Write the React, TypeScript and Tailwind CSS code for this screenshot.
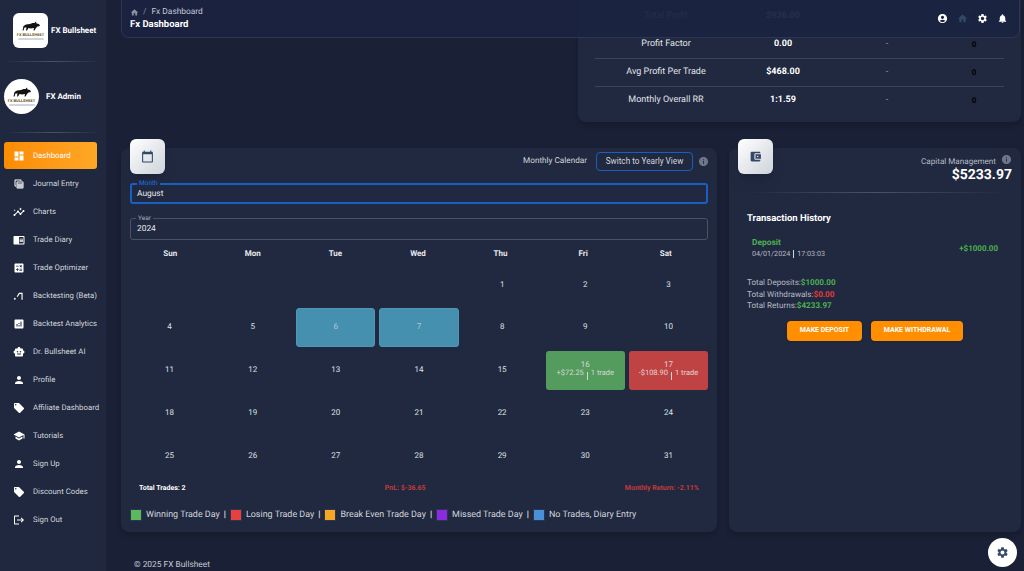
import {
  MdAccountBalanceWallet,
  MdAccountCircle,
  MdAnalytics,
  MdCalculate,
  MdCalendarToday,
  MdChromeReaderMode,
  MdDashboard,
  MdHome,
  MdInfo,
  MdInsights,
  MdLocalOffer,
  MdLogout,
  MdNotifications,
  MdPerson,
  MdSchool,
  MdSettings,
  MdSmartToy,
  MdTableView,
} from 'react-icons/md'

function BacktestIcon() {
  return (
    <svg viewBox="0 0 24 24" className="w-[11px] h-[11px]" fill="currentColor">
      <circle cx="4" cy="19" r="2" />
      <path d="M8 14l5-8h8v15h-2.5V8.5h-4L10 15.5z" />
    </svg>
  )
}

function BullLogo() {
  return (
    <div className="flex flex-col items-center w-full">
      <svg viewBox="0 0 40 20" className="w-[20px] h-[11px]" fill="#15120f">
        <path d="M3 18l2-9 5-3 8-1 5-2 4 0 3-3 1 4 5 1 2 4-5 1-3 3-3 5h-2l1-5-6 1-5-1-3 5H10l1-6-4 0-2 6z" />
      </svg>
      <span className="text-[4px] leading-[5px] font-bold text-[#6b5320] whitespace-nowrap">FX BULLSHEET</span>
      <div className="w-[26px] h-[2px] bg-gray-300 rounded-full mt-px" />
    </div>
  )
}

const navItems = [
  { label: 'Dashboard', icon: <MdDashboard size={12} />, active: true },
  { label: 'Journal Entry', icon: <MdTableView size={12} /> },
  { label: 'Charts', icon: <MdInsights size={12} /> },
  { label: 'Trade Diary', icon: <MdChromeReaderMode size={12} /> },
  { label: 'Trade Optimizer', icon: <MdCalculate size={12} /> },
  { label: 'Backtesting (Beta)', icon: <BacktestIcon /> },
  { label: 'Backtest Analytics', icon: <MdAnalytics size={12} /> },
  { label: 'Dr. Bullsheet AI', icon: <MdSmartToy size={12} /> },
  { label: 'Profile', icon: <MdPerson size={12} /> },
  { label: 'Affiliate Dashboard', icon: <MdLocalOffer size={12} /> },
  { label: 'Tutorials', icon: <MdSchool size={12} /> },
  { label: 'Sign Up', icon: <MdPerson size={12} /> },
  { label: 'Discount Codes', icon: <MdLocalOffer size={12} /> },
  { label: 'Sign Out', icon: <MdLogout size={12} /> },
]

const stats = [
  { label: 'Profit Factor', value: '0.00' },
  { label: 'Avg Profit Per Trade', value: '$468.00' },
  { label: 'Monthly Overall RR', value: '1:1.59' },
]

const weekDays = ['Sun', 'Mon', 'Tue', 'Wed', 'Thu', 'Fri', 'Sat']

const legend = [
  { label: 'Winning Trade Day', color: 'bg-[#5cb85c]' },
  { label: 'Losing Trade Day', color: 'bg-[#e74040]' },
  { label: 'Break Even Trade Day', color: 'bg-[#f5a623]' },
  { label: 'Missed Trade Day', color: 'bg-[#8a2be2]' },
  { label: 'No Trades, Diary Entry', color: 'bg-[#4a90d9]' },
]

function Divider() {
  return <div className="h-px mx-1 bg-gradient-to-r from-transparent via-[#4a5264] to-transparent shrink-0" />
}

function Sidebar() {
  return (
    <aside className="w-[106px] shrink-0 h-full bg-[#1f283e] text-white flex flex-col">
      <div className="h-[61px] flex items-center pl-[13px] gap-[3px] shrink-0">
        <div className="w-[35px] h-[35px] bg-white rounded-[6px] flex items-center justify-center">
          <BullLogo />
        </div>
        <span className="text-[8px] font-bold">FX Bullsheet</span>
      </div>
      <Divider />
      <div className="h-[70px] flex items-center pl-[4px] gap-[7px] shrink-0 pb-[1px]">
        <div className="w-[35px] h-[35px] bg-white rounded-full flex items-center justify-center">
          <BullLogo />
        </div>
        <span className="text-[8px] font-bold">FX Admin</span>
      </div>
      <Divider />
      <nav className="mt-[9px] flex flex-col gap-px">
        {navItems.map((item) => (
          <div
            key={item.label}
            className={
              item.active
                ? 'h-[27px] ml-1 w-[93px] flex items-center rounded-[3px] bg-gradient-to-r from-[#fb8c00] to-[#ffa726] text-white'
                : 'h-[27px] ml-1 w-[93px] flex items-center rounded-[3px] text-white'
            }
          >
            <span className="w-[29px] pl-[9px] flex shrink-0">{item.icon}</span>
            <span className={item.active ? 'pt-px text-[7.8px] whitespace-nowrap' : 'pt-px text-[7.8px] whitespace-nowrap text-[#d3d6dc]'}>
              {item.label}
            </span>
          </div>
        ))}
      </nav>
    </aside>
  )
}

function Header() {
  return (
    <header className="absolute top-0 left-[15px] w-[899px] h-[38px] rounded-b-[8px] border border-t-0 border-[#2a3652] bg-[#1a2340]/95 flex items-center justify-between pl-[8px] pr-[11px] text-white">
      <div>
        <div className="flex items-center gap-[4px] text-[8.4px] text-[#c5c9d2] leading-[11px]">
          <MdHome size={9} className="text-[#8a90a0]" />
          <span className="text-[#8a90a0]">/</span>
          <span className="ml-[1px]">Fx Dashboard</span>
        </div>
        <div className="text-[9.5px] font-bold mt-[1px] leading-[12px]">Fx Dashboard</div>
      </div>
      <div className="flex items-center gap-[9px]">
        <MdAccountCircle size={11} />
        <MdHome size={11} className="text-[#344767]" />
        <MdSettings size={11} />
        <MdNotifications size={11} />
      </div>
    </header>
  )
}

function StatRow({ label, value, last }: { label: string; value: string; last?: boolean }) {
  return (
    <div className={last ? 'grid grid-cols-[142px_92px_116px_58px] items-center h-[28px] text-[9px]' : 'grid grid-cols-[142px_92px_116px_58px] items-center h-[28px] text-[9px] border-b border-[#3a445a]'}>
      <span className="text-center text-[#e2e4e8]">{label}</span>
      <span className="text-center font-bold text-white">{value}</span>
      <span className="text-center text-[#9aa0ad]">-</span>
      <span className="text-center text-black font-bold text-[8px]">0</span>
    </div>
  )
}

function StatsCard() {
  return (
    <div className="h-[122px] flex justify-end shrink-0 pr-[3px]">
      <div className="w-[443px] h-[122px] rounded-b-[8px] bg-[#202940] px-[17px] pt-[3px] shadow-md">
        <StatRow label="Total Profit" value="$936.00" />
        {stats.map((s, i) => (
          <StatRow key={s.label} label={s.label} value={s.value} last={i === stats.length - 1} />
        ))}
      </div>
    </div>
  )
}

function IconTile({ children }: { children: React.ReactNode }) {
  return (
    <div className="absolute -top-[9px] left-[9px] w-[35px] h-[35px] rounded-[6px] bg-gradient-to-br from-white to-[#ced4da] flex items-center justify-center text-[#344767] shadow-lg">
      {children}
    </div>
  )
}

function Field({ label, value, focused }: { label: string; value: string; focused?: boolean }) {
  return (
    <div
      className={
        focused
          ? 'relative h-[21px] rounded-[3px] border-2 border-[#1a5fc0] flex items-center pl-[5px] pt-px text-[8.4px] text-[#e6e8ec]'
          : 'relative h-[22px] rounded-[3px] border border-[#4a5264] flex items-center pl-[6px] pt-px text-[8.4px] text-[#e6e8ec]'
      }
    >
      <span
        className={
          focused
            ? 'absolute -top-[6px] left-[5px] px-[2px] bg-[#202940] text-[6.5px] leading-[8px] text-[#1a73e8]'
            : 'absolute -top-[5px] left-[5px] px-[2px] bg-[#202940] text-[6.5px] leading-[8px] text-[#aeb3bd]'
        }
      >
        {label}
      </span>
      {value}
    </div>
  )
}

function DayCell({ day }: { day: number }) {
  if (day === 6 || day === 7) {
    return (
      <div className="h-[39px] rounded-[3px] bg-[#458faf] border border-[#4f97b5] flex items-center justify-center text-[8px] text-[#b9c6cf]">
        {day}
      </div>
    )
  }
  if (day === 16 || day === 17) {
    const win = day === 16
    return (
      <div className={win ? 'h-[39px] rounded-[3px] bg-[#549c5d] flex flex-col items-center justify-center text-[#d2d8d6]' : 'h-[39px] rounded-[3px] bg-[#c04343] flex flex-col items-center justify-center text-[#e0d5d8]'}>
        <span className="text-[8px] leading-[9px]">{day}</span>
        <div className="flex items-start text-[7.5px] leading-[8px] gap-[3px] whitespace-nowrap">
          <span>{win ? '+$72.25' : '-$108.90'}</span>
          <span className="mt-[3px] h-[8px] w-px bg-[#d2d8d6]" />
          <span>1 trade</span>
        </div>
      </div>
    )
  }
  return <div className="h-[39px] flex items-center justify-center text-[8px] text-[#dfe1e6]">{day}</div>
}

function CalendarCard() {
  const days: (number | null)[] = [null, null, null, null]
  for (let d = 1; d <= 31; d++) days.push(d)

  return (
    <section className="relative w-[596px] h-[384px] shrink-0 rounded-[8px] bg-[#202940] px-[9px] pt-[4px] shadow-md">
      <IconTile>
        <MdCalendarToday size={13} />
      </IconTile>
      <div className="h-[19px] flex items-center justify-end">
        <span className="text-[8.2px] text-[#d3d6dc]">Monthly Calendar</span>
        <button className="ml-[9px] h-[19px] w-[97px] rounded-[4px] border border-[#1a5fc0] text-[8.2px] text-[#d3d6dc]">Switch to Yearly View</button>
        <MdInfo size={11} className="text-[#6f7687] ml-[5px] mr-[-1px]" />
      </div>
      <div className="mt-[12px] flex flex-col gap-[14px]">
        <Field label="Month" value="August" focused />
        <Field label="Year" value="2024" />
      </div>
      <div className="mt-[8px] ml-px mr-[3px] grid grid-cols-7 gap-x-1 text-[8px] font-bold text-[#e6e8ec] h-[12px] leading-[12px] text-center">
        {weekDays.map((d) => (
          <span key={d}>{d}</span>
        ))}
      </div>
      <div className="mt-[5px] grid grid-cols-7 gap-x-1 gap-y-[3.75px]">
        {days.map((d, i) => (d === null ? <div key={i} className="h-[39px]" /> : <DayCell key={i} day={d} />))}
      </div>
      <div className="mt-[8px] flex justify-between items-center px-[9px] text-[7px] font-bold h-[10px]">
        <span className="text-white">Total Trades: 2</span>
        <span className="text-[#c23a3a]">PnL: $-36.65</span>
        <span className="text-[#c23a3a]">Monthly Return: -2.11%</span>
      </div>
      <div className="mt-[15px] flex items-center text-[8.95px] text-[#d3d6dc]">
        {legend.map((l, i) => (
          <div key={l.label} className="flex items-center">
            <span className={`w-[12px] h-[12px] border border-[#2c3550] ${l.color}`} />
            <span className="ml-[4px] mt-px">{l.label}</span>
            {i < legend.length - 1 && <span className="mx-[4px] mt-px text-white">|</span>}
          </div>
        ))}
      </div>
    </section>
  )
}

function CapitalCard() {
  return (
    <section className="relative w-[292px] h-[384px] shrink-0 rounded-[8px] bg-[#202940] shadow-md">
      <IconTile>
        <MdAccountBalanceWallet size={13} />
      </IconTile>
      <div className="pt-[4px] pr-[9px] flex flex-col items-end">
        <div className="flex items-center gap-[5px]">
          <span className="text-[8.1px] mt-[3px] text-[#b8bcc6]">Capital Management</span>
          <MdInfo size={11} className="text-[#6f7687]" />
        </div>
        <span className="text-[14px] leading-[16px] font-bold text-white">$5233.97</span>
      </div>
      <div className="mt-[9px] mx-[16px] h-px bg-gradient-to-r from-transparent via-[#4a5264] to-transparent" />
      <div className="px-[18px]">
        <h3 className="mt-[20px] text-[9.5px] leading-[12px] font-bold text-white">Transaction History</h3>
        <div className="mt-[13px] pl-[5px] pr-[5px] flex items-center justify-between">
          <div>
            <div className="text-[8.4px] leading-[10px] font-bold text-[#4caf50]">Deposit</div>
            <div className="mt-[1px] flex items-center gap-[3px] text-[7.2px] leading-[10px] text-[#b8bcc6]">
              04/01/2024 <span className="h-[8px] w-px bg-[#d3d6dc]" /> 17:03:03
            </div>
          </div>
          <span className="text-[8px] font-bold text-[#4caf50]">+$1000.00</span>
        </div>
        <div className="mt-[18px] text-[8.1px] leading-[11.5px] text-[#b8bcc6]">
          <div>Total Deposits:<span className="font-bold text-[#4caf50]">$1000.00</span></div>
          <div>Total Withdrawals:<span className="font-bold text-[#e53935]">$0.00</span></div>
          <div>Total Returns:<span className="font-bold text-[#4caf50]">$4233.97</span></div>
        </div>
        <div className="mt-[9px] flex justify-center gap-[9px]">
          <button className="w-[75px] h-[20px] rounded-[4px] bg-[#ff8f00] text-white text-[7px] font-bold shadow">MAKE DEPOSIT</button>
          <button className="w-[92px] h-[20px] rounded-[4px] bg-[#ff8f00] text-white text-[7px] font-bold shadow">MAKE WITHDRAWAL</button>
        </div>
      </div>
    </section>
  )
}

export default function App() {
  return (
    <div className="relative h-screen w-full overflow-hidden flex bg-[#1a2035] font-['Roboto',sans-serif] [text-rendering:geometricPrecision]">
      <Sidebar />
      <main className="relative flex-1 min-w-0 flex flex-col">
        <StatsCard />
        <div className="mt-[26px] pl-[15px] flex gap-[12px]">
          <CalendarCard />
          <CapitalCard />
        </div>
        <footer className="mt-[27px] pl-[28px] text-[8.4px] leading-[12px] text-[#c5c9d2]">© 2025 FX Bullsheet</footer>
        <Header />
      </main>
      <button className="absolute right-[7px] bottom-[4px] w-[29px] h-[29px] rounded-full bg-white flex items-center justify-center text-[#344767]">
        <MdSettings size={13} />
      </button>
    </div>
  )
}
